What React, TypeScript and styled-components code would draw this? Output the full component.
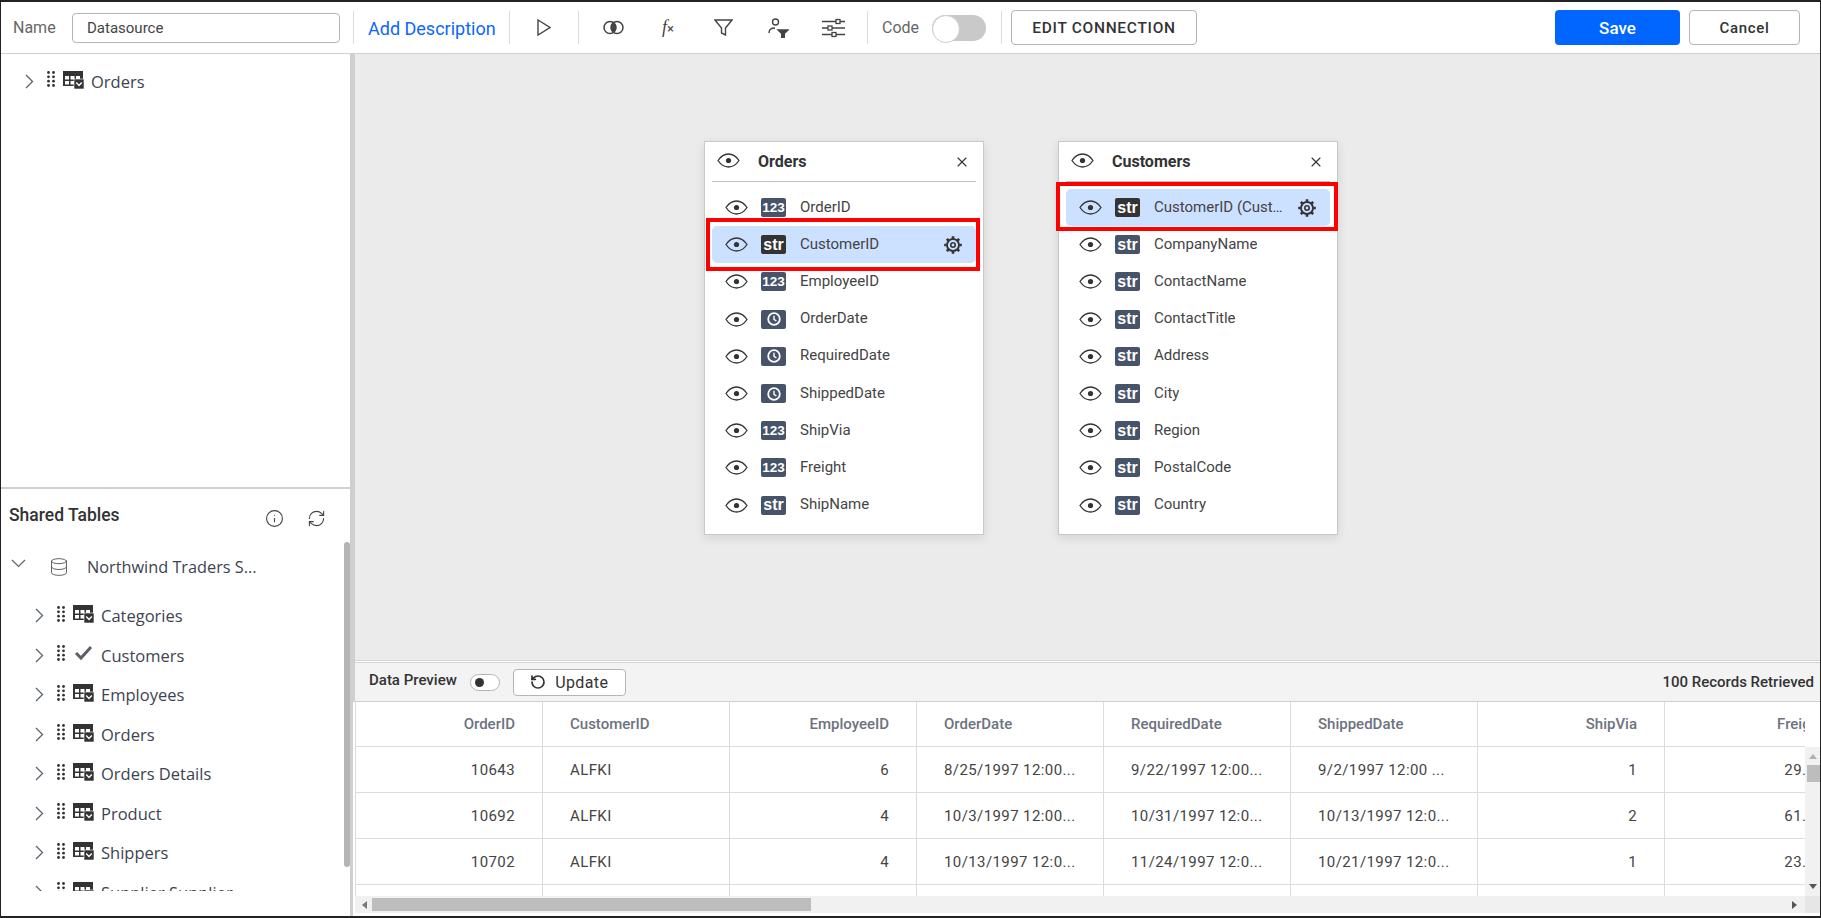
import React from "react";
import styled, { createGlobalStyle } from "styled-components";
import { Database, Info, RefreshCw, RotateCw, X } from "lucide-react";

const GlobalStyle = createGlobalStyle`
	html, body {
		margin: 0;
		padding: 0;
		background: #fff;
		font-family: Roboto, "Liberation Sans", sans-serif;
	}
	* {
		box-sizing: border-box;
	}
`;

const Page = styled.div`
	width: 1821px;
	height: 918px;
	border: solid #222;
	border-width: 2px 1px;
	display: flex;
	flex-direction: column;
	overflow: hidden;
	background: #fff;
`;

const Toolbar = styled.header`
	height: 52px;
	flex: none;
	display: flex;
	align-items: center;
	padding: 0 20px 0 12px;
	border-bottom: 1px solid #d0d0d0;
`;

const NameLabel = styled.label`
	width: 59px;
	font-size: 16px;
	color: #666;
`;

const NameInput = styled.input`
	width: 268px;
	height: 30px;
	padding: 0 14px;
	border: 1px solid #b5b5b5;
	border-radius: 4px;
	font: 400 15px Roboto, sans-serif;
	color: #444;
	outline: none;
`;

const Sep = styled.div<{ $ml: number }>`
	width: 1px;
	height: 33px;
	flex: none;
	margin-left: ${(p) => p.$ml}px;
	background: #ddd;
`;

const AddDescription = styled.a`
	margin: 2px 0 0 14px;
	width: 127px;
	white-space: nowrap;
	font-size: 18px;
	color: #0d66ff;
`;

const Tool = styled.span<{ $ml: number }>`
	display: flex;
	flex: none;
	margin-left: ${(p) => p.$ml}px;
	color: #444;
`;

const FxText = styled(Tool)`
	width: 15px;
	font: italic 400 18px "Liberation Serif", serif;
	align-items: baseline;
	transform: translateX(1px);
	small {
		font: 400 13px Roboto, sans-serif;
	}
`;

const CodeLabel = styled.span`
	width: 37px;
	margin-left: 14px;
	font-size: 16px;
	color: #666;
`;

const CodeToggle = styled.div`
	width: 54px;
	height: 26px;
	margin-left: 13px;
	border-radius: 13px;
	background: #c9c9c9;
	position: relative;
	&::before {
		content: "";
		position: absolute;
		left: 0;
		top: 0;
		width: 26px;
		height: 26px;
		border-radius: 50%;
		border: 1px solid #ccc;
		background: #fff;
	}
`;

const OutlineButton = styled.button<{ $w: number; $ml: number; $size?: number }>`
	width: ${(p) => p.$w}px;
	height: 35px;
	margin-left: ${(p) => p.$ml}px;
	flex: none;
	background: #fff;
	border: 1px solid #b5b5b5;
	border-radius: 4px;
	font: 500 ${(p) => p.$size ?? 15}px Roboto, sans-serif;
	color: #333;
	letter-spacing: 0.7px;
	padding: 0;
`;

const SaveButton = styled.button`
	width: 125px;
	height: 35px;
	margin-left: auto;
	flex: none;
	background: #0066ff;
	border: none;
	border-radius: 4px;
	font: 500 17px Roboto, sans-serif;
	color: #fff;
`;

const Body = styled.div`
	flex: 1;
	min-height: 0;
	display: flex;
`;

const Sidebar = styled.aside`
	width: 352px;
	flex: none;
	border-right: 3px solid #cfcfcf;
	display: flex;
	flex-direction: column;
`;

const SelectedTree = styled.div`
	height: 435px;
	flex: none;
	padding-top: 7px;
	border-bottom: 2px solid #d0d0d0;
`;

const TreeRow = styled.div<{ $indent: number; $h?: number }>`
	height: ${(p) => p.$h ?? 39.5}px;
	display: flex;
	align-items: center;
	padding-left: ${(p) => p.$indent}px;
	font: 400 16.5px "Open Sans", sans-serif;
	color: #3c4450;
	white-space: nowrap;
`;

const Grip = styled.svg`
	width: 8px;
	height: 16px;
	margin: -4px 0 0 13px;
	flex: none;
`;

const TableGlyph = styled.svg`
	width: 21px;
	height: 18px;
	margin: -3px 7px 0 8px;
	flex: none;
`;

const CheckGlyph = styled.svg`
	width: 21px;
	height: 18px;
	margin: -4px 7px 0 8px;
	flex: none;
`;

const SharedPanel = styled.div`
	flex: 1;
	min-height: 0;
	position: relative;
`;

const SharedHead = styled.div`
	height: 54px;
	display: flex;
	align-items: center;
	padding: 0 24px 0 8px;
	color: #444;
	h3 {
		margin: -3px auto 0 0;
		font-size: 17.5px;
		font-weight: 500;
		color: #333;
	}
	svg {
		margin-top: 4px;
	}
	svg + svg {
		margin-left: 23px;
	}
`;

const SourceRow = styled.div`
	height: 53px;
	padding: 0 0 5px 10px;
	display: flex;
	align-items: center;
	font: 400 16.3px "Open Sans", sans-serif;
	color: #3c4450;
	svg:first-child {
		margin: -8px 23px 0 0;
	}
	svg:nth-child(2) {
		margin-right: 18px;
		color: #555;
	}
`;

const TreeList = styled.div`
	height: 295px;
	overflow: hidden;
`;

const SideScroll = styled.div`
	position: absolute;
	right: 0;
	top: 53px;
	width: 6px;
	height: 325px;
	border-radius: 3px;
	background: #b4b4b4;
`;

const Main = styled.main`
	flex: 1;
	min-width: 0;
	display: flex;
	flex-direction: column;
	border-left: 2px solid #cfcfcf;
`;

const Canvas = styled.div`
	height: 607px;
	flex: none;
	position: relative;
	background: #ebebeb;
	border-bottom: 1px solid #d4d4d4;
`;

const Card = styled.section<{ $x: number }>`
	position: absolute;
	left: ${(p) => p.$x}px;
	top: 87px;
	width: 280px;
	height: 394px;
	background: #fff;
	border: 1px solid #c8c8c8;
	box-shadow: 0 3px 10px rgba(0, 0, 0, 0.1);
`;

const CardHead = styled.div`
	height: 40px;
	margin: 0 7px;
	display: flex;
	align-items: center;
	padding: 0 6px 0 5px;
	border-bottom: 1px solid #c0c0c0;
	color: #333;
	> svg:first-child {
		margin-top: -3px;
	}
	h4 {
		margin: 0 auto 0 18px;
		font-size: 16px;
		font-weight: 700;
		color: #333;
	}
`;

const FieldList = styled.div`
	padding-top: 7px;
`;

const FieldRow = styled.div<{ $selected?: boolean }>`
	height: 37.2px;
	margin: 0 7px;
	padding: 0 13px;
	display: flex;
	align-items: center;
	position: relative;
	border-radius: 5px;
	background: ${(p) => (p.$selected ? "#cce0ff" : "transparent")};
	color: #333;
`;

const TypeBadge = styled.span<{ $selected?: boolean }>`
	width: 25px;
	height: 19px;
	margin-left: 13px;
	flex: none;
	display: flex;
	align-items: center;
	justify-content: center;
	border-radius: 2px;
	background: ${(p) => (p.$selected ? "#333" : "#465369")};
	color: #fff;
	font: 700 16px "Liberation Sans", sans-serif;
	&.num {
		font-size: 13.5px;
	}
`;

const FieldName = styled.span`
	margin: -2px 0 0 14px;
	max-width: 130px;
	font-size: 15px;
	color: #444;
	white-space: nowrap;
	overflow: hidden;
	text-overflow: ellipsis;
`;

const RedBox = styled.div<{ $inset: string }>`
	position: absolute;
	inset: ${(p) => p.$inset};
	border: 4px solid #f00;
	pointer-events: none;
`;

const GearWrap = styled.span`
	margin-left: auto;
	display: flex;
	color: #333;
`;

const PreviewBar = styled.div`
	height: 40px;
	margin-top: 1px;
	flex: none;
	display: flex;
	align-items: center;
	padding: 0 6px 0 14px;
	background: #f3f3f3;
	border-top: 1px solid #d4d4d4;
	border-bottom: 1px solid #cfcfcf;
	h5 {
		margin: -4px 0 0 0;
		font-size: 15px;
		font-weight: 500;
		color: #333;
	}
	strong {
		margin-left: auto;
		font-size: 15px;
		font-weight: 500;
		color: #333;
	}
`;

const MiniToggle = styled.div`
	width: 30px;
	height: 17px;
	margin-left: 13px;
	position: relative;
	background: #fff;
	border: 1px solid #b5b5b5;
	border-radius: 9px;
	&::before {
		content: "";
		position: absolute;
		left: 4px;
		top: 3px;
		width: 9px;
		height: 9px;
		border-radius: 50%;
		background: #333;
	}
`;

const UpdateButton = styled.button`
	width: 113px;
	height: 27px;
	margin-left: 13px;
	display: flex;
	align-items: center;
	justify-content: center;
	gap: 9px;
	background: #fff;
	border: 1px solid #b5b5b5;
	border-radius: 4px;
	font: 400 16px Roboto, sans-serif;
	color: #333;
	letter-spacing: 0.4px;
	padding: 0;
`;

const TableWrap = styled.div`
	flex: 1;
	min-height: 0;
	margin-left: -2px;
	padding-left: 2px;
	background: #fff;
	display: flex;
	flex-direction: column;
	position: relative;
`;

const GridArea = styled.div`
	height: 194px;
	flex: none;
	position: relative;
	overflow: hidden;
	border-left: 1px solid #dcdcdc;
`;

const GridClip = styled.div`
	width: 1449px;
	overflow: hidden;
	height: 194px;
`;

const DataRow = styled.div<{ $head?: boolean }>`
	display: grid;
	grid-template-columns: repeat(8, 187px);
	width: 1496px;
	height: ${(p) => (p.$head ? 45 : 46)}px;
	border-bottom: 1px solid #dcdcdc;
`;

const Cell = styled.div<{ $right?: boolean; $head?: boolean }>`
	display: flex;
	align-items: center;
	padding: 0 27px;
	border-right: 1px solid #dcdcdc;
	justify-content: ${(p) => (p.$right ? "flex-end" : "flex-start")};
	font-size: 15px;
	font-weight: ${(p) => (p.$head ? 500 : 400)};
	color: ${(p) => (p.$head ? "#6d7280" : "#444")};
	letter-spacing: ${(p) => (p.$head ? 0 : 0.4)}px;
	white-space: nowrap;
	overflow: hidden;
`;

const VScroll = styled.div`
	position: absolute;
	right: 0;
	top: 45px;
	width: 15px;
	height: 149px;
	background: #f1f1f1;
	&::before {
		content: "";
		position: absolute;
		left: 2px;
		top: 18px;
		width: 13px;
		height: 17px;
		background: #bdbdbd;
	}
`;

const Arrow = styled.i<{ $dir: "up" | "down" | "left" | "right" }>`
	position: absolute;
	width: 0;
	height: 0;
	border: 4px solid transparent;
	${(p) =>
		p.$dir === "up"
			? "border-bottom: 5px solid #b0b0b0; border-top: 0; left: 4px; top: 7px;"
			: p.$dir === "down"
				? "border-top: 5px solid #555; border-bottom: 0; left: 4px; bottom: 7px;"
				: p.$dir === "left"
					? "border-right: 5px solid #777; border-left: 0; left: 7px; top: 5px;"
					: "border-left: 5px solid #555; border-right: 0; right: 23px; top: 5px;"}
`;

const HScroll = styled.div`
	height: 17px;
	flex: none;
	position: relative;
	background: #f1f1f1;
	&::before {
		content: "";
		position: absolute;
		left: 17px;
		top: 2px;
		width: 439px;
		height: 13px;
		background: #bdbdbd;
	}
	&::after {
		content: "";
		position: absolute;
		right: 0;
		top: 0;
		width: 15px;
		height: 17px;
		background: #e6e6e6;
	}
`;

const Chevron = ({ down }: { down?: boolean }) =>
	down ? (
		<svg width="15" height="9" viewBox="0 0 15 9" fill="none" stroke="#5a6470" strokeWidth="1.2">
			<path d="M1 1l6.5 6.5L14 1" />
		</svg>
	) : (
		<svg width="9" height="15" viewBox="0 0 9 15" fill="none" stroke="#5a6470" strokeWidth="1.3" style={{ flex: "none" }}>
			<path d="M1 1l6.5 6.5L1 14" />
		</svg>
	);

const GripIcon = () => (
	<Grip viewBox="0 0 8 16" fill="#333">
		{[1.5, 5.8, 10.2, 14.5].map((y) => (
			<React.Fragment key={y}>
				<circle cx="1.5" cy={y} r="1.4" />
				<circle cx="6.5" cy={y} r="1.4" />
			</React.Fragment>
		))}
	</Grip>
);

const TableIcon = () => (
	<TableGlyph viewBox="0 0 21 18">
		<rect x="0" y="0" width="20" height="15" fill="#333" />
		<g fill="#fff">
			<rect x="2" y="5" width="4" height="3.5" />
			<rect x="7.5" y="5" width="4" height="3.5" />
			<rect x="13" y="5" width="4" height="3.5" />
			<rect x="2" y="10" width="4" height="3.5" />
			<rect x="7.5" y="10" width="4" height="3.5" />
		</g>
		<rect x="11" y="8" width="10" height="10" fill="#333" stroke="#fff" strokeWidth="0.6" />
		<path d="M13.2 11.6l2.8 2.8 2.8-2.8" fill="none" stroke="#fff" strokeWidth="1.4" />
	</TableGlyph>
);

const CheckIcon = () => (
	<CheckGlyph viewBox="0 0 21 18">
		<path d="M3 9l5 5L18 3" fill="none" stroke="#5e5e6a" strokeWidth="3" />
	</CheckGlyph>
);

const Eye = () => (
	<svg width="23" height="15" viewBox="0 0 23 15" fill="none" stroke="#333" strokeWidth="1.3" style={{ flex: "none" }}>
		<path d="M1 7.5C4 3 7.5 1 11.5 1S19 3 22 7.5C19 12 15.5 14 11.500 14S4 12 1 7.5Z" />
		<circle cx="11.5" cy="7.5" r="2.6" fill="#333" stroke="none" />
	</svg>
);

const Gear = () => (
	<svg width="20" height="20" viewBox="0 0 20 20" fill="none" stroke="currentColor">
		<circle cx="10" cy="10" r="6" strokeWidth="1.9" />
		<circle cx="10" cy="10" r="2.2" strokeWidth="1.6" />
		<g strokeWidth="2.6">
			<path d="M10 1.2v2.4M10 16.4v2.4M1.2 10h2.4M16.4 10h2.4" />
			<path d="M3.8 3.8l1.7 1.7M14.5 14.5l1.7 1.7M3.8 16.2l1.7-1.7M14.5 5.5l1.7-1.7" />
		</g>
	</svg>
);

const ClockFace = () => (
	<svg width="14" height="14" viewBox="0 0 14 14" fill="none" stroke="#fff">
		<circle cx="7" cy="7" r="5.8" strokeWidth="1.8" />
		<path d="M7 3.8V7.4L9.4 9" strokeWidth="1.4" />
	</svg>
);

type FieldKind = "num" | "str" | "date";

const Field = ({
	kind,
	name,
	selected,
	inset,
}: {
	kind: FieldKind;
	name: string;
	selected?: boolean;
	inset?: string;
}) => (
	<FieldRow $selected={selected}>
		<Eye />
		<TypeBadge $selected={selected} className={kind === "num" ? "num" : undefined}>
			{kind === "num" ? "123" : kind === "str" ? "str" : <ClockFace />}
		</TypeBadge>
		<FieldName>{name}</FieldName>
		{selected && (
			<GearWrap>
				<Gear />
			</GearWrap>
		)}
		{inset && <RedBox $inset={inset} />}
	</FieldRow>
);

const orderFields: [FieldKind, string][] = [
	["num", "OrderID"],
	["str", "CustomerID"],
	["num", "EmployeeID"],
	["date", "OrderDate"],
	["date", "RequiredDate"],
	["date", "ShippedDate"],
	["num", "ShipVia"],
	["num", "Freight"],
	["str", "ShipName"],
];

const customerFields = [
	"CustomerID (Customers)",
	"CompanyName",
	"ContactName",
	"ContactTitle",
	"Address",
	"City",
	"Region",
	"PostalCode",
	"Country",
];

const sharedTables = ["Categories", "Customers", "Employees", "Orders", "Orders Details", "Product", "Shippers", "Supplier Supplier"];

const rightCols = [0, 2, 6, 7];
const headers = ["OrderID", "CustomerID", "EmployeeID", "OrderDate", "RequiredDate", "ShippedDate", "ShipVia", "Freight"];
const rows = [
	["10643", "ALFKI", "6", "8/25/1997 12:00...", "9/22/1997 12:00...", "9/2/1997 12:00 ...", "1", "29.46"],
	["10692", "ALFKI", "4", "10/3/1997 12:00...", "10/31/1997 12:0...", "10/13/1997 12:0...", "2", "61.02"],
	["10702", "ALFKI", "4", "10/13/1997 12:0...", "11/24/1997 12:0...", "10/21/1997 12:0...", "1", "23.94"],
	["", "", "", "", "", "", "", ""],
];

function App() {
	return (
		<>
			<GlobalStyle />
			<Page>
				<Toolbar>
					<NameLabel>Name</NameLabel>
					<NameInput defaultValue="Datasource" />
					<Sep $ml={13} />
					<AddDescription>Add Description</AddDescription>
					<Sep $ml={14} />
					<Tool $ml={27}>
						<svg width="14" height="17" viewBox="0 0 14 17" fill="none" stroke="#444" strokeWidth="1.4">
							<path d="M1 1l12 7.5L1 16Z" />
						</svg>
					</Tool>
					<Sep $ml={27} />
					<Tool $ml={24}>
						<svg width="21" height="15" viewBox="0 0 21 15" fill="none" stroke="#444" strokeWidth="1.5">
							<path d="M10.5 3a6.4 6.4 0 0 1 0 9 6.4 6.4 0 0 1 0-9Z" fill="#444" />
							<circle cx="7" cy="7.5" r="6" />
							<circle cx="14" cy="7.5" r="6" />
						</svg>
					</Tool>
					<FxText $ml={37}>
						f<small>×</small>
					</FxText>
					<Tool $ml={38}>
						<svg width="19" height="17" viewBox="0 0 19 17" fill="none" stroke="#444" strokeWidth="1.4">
							<path d="M1 1h17l-6.5 8v7l-4-2V9Z" />
						</svg>
					</Tool>
					<Tool $ml={35}>
						<svg width="21" height="20" viewBox="0 0 21 20" fill="none" stroke="#444" strokeWidth="1.4">
							<circle cx="7.5" cy="4" r="3" />
							<path d="M1 15c0-3 2-5 6-5" />
							<path d="M10 12h10l-3.7 3.6V20h-2.6v-4.4Z" fill="#444" />
						</svg>
					</Tool>
					<Tool $ml={33}>
						<svg width="23" height="20" viewBox="0 0 23 20" fill="none" stroke="#444" strokeWidth="1.3">
							<path d="M0 3.5h14M18 3.5h5M0 10h6M10 10h13M0 16.500h10M14 16.500h9" />
							<rect x="14" y="1.500" width="4" height="4" />
							<rect x="6" y="8" width="4" height="4" />
							<rect x="10" y="14.500" width="4" height="4" />
						</svg>
					</Tool>
					<Sep $ml={22} />
					<CodeLabel>Code</CodeLabel>
					<CodeToggle />
					<Sep $ml={15} />
					<OutlineButton $w={186} $ml={9} $size={15.5}>
						EDIT CONNECTION
					</OutlineButton>
					<SaveButton>Save</SaveButton>
					<OutlineButton $w={111} $ml={9}>
						Cancel
					</OutlineButton>
				</Toolbar>
				<Body>
					<Sidebar>
						<SelectedTree>
							<TreeRow $indent={24} $h={40}>
								<Chevron />
								<GripIcon />
								<TableIcon />
								Orders
							</TreeRow>
						</SelectedTree>
						<SharedPanel>
							<SharedHead>
								<h3>Shared Tables</h3>
								<Info size={19} strokeWidth={1.4} />
								<RefreshCw size={19} strokeWidth={1.4} />
							</SharedHead>
							<SourceRow>
								<Chevron down />
								<Database size={20} strokeWidth={1.1} />
								Northwind Traders S...
							</SourceRow>
							<TreeList>
								{sharedTables.map((name) => (
									<TreeRow key={name} $indent={34}>
										<Chevron />
										<GripIcon />
										{name === "Customers" ? <CheckIcon /> : <TableIcon />}
										{name}
									</TreeRow>
								))}
							</TreeList>
							<SideScroll />
						</SharedPanel>
					</Sidebar>
					<Main>
						<Canvas>
							<Card $x={349}>
								<CardHead>
									<Eye />
									<h4>Orders</h4>
									<X size={16} strokeWidth={1.6} />
								</CardHead>
								<FieldList>
									{orderFields.map(([kind, name]) => (
										<Field
											key={name}
											kind={kind}
											name={name}
											selected={name === "CustomerID"}
											inset={name === "CustomerID" ? "-8px -4px -8px -6px" : undefined}
										/>
									))}
								</FieldList>
							</Card>
							<Card $x={703}>
								<CardHead>
									<Eye />
									<h4>Customers</h4>
									<X size={16} strokeWidth={1.6} />
								</CardHead>
								<FieldList>
									{customerFields.map((name, i) => (
										<Field
											key={name}
											kind="str"
											name={name}
											selected={i === 0}
											inset={i === 0 ? "-7px -8px -5px -10px" : undefined}
										/>
									))}
								</FieldList>
							</Card>
						</Canvas>
						<PreviewBar>
							<h5>Data Preview</h5>
							<MiniToggle />
							<UpdateButton>
								<RotateCw size={16} strokeWidth={2.6} style={{ transform: "scaleX(-1)" }} />
								Update
							</UpdateButton>
							<strong>100 Records Retrieved</strong>
						</PreviewBar>
						<TableWrap>
							<GridArea>
								<GridClip>
									<DataRow $head>
										{headers.map((h, i) => (
											<Cell key={h} $head $right={rightCols.includes(i)}>
												{h}
											</Cell>
										))}
									</DataRow>
									{rows.map((row, r) => (
										<DataRow key={r}>
											{row.map((v, i) => (
												<Cell key={i} $right={rightCols.includes(i)}>
													{v}
												</Cell>
											))}
										</DataRow>
									))}
								</GridClip>
								<VScroll>
									<Arrow $dir="up" />
									<Arrow $dir="down" />
								</VScroll>
							</GridArea>
							<HScroll>
								<Arrow $dir="left" />
								<Arrow $dir="right" />
							</HScroll>
						</TableWrap>
					</Main>
				</Body>
			</Page>
		</>
	);
}

export default App;
